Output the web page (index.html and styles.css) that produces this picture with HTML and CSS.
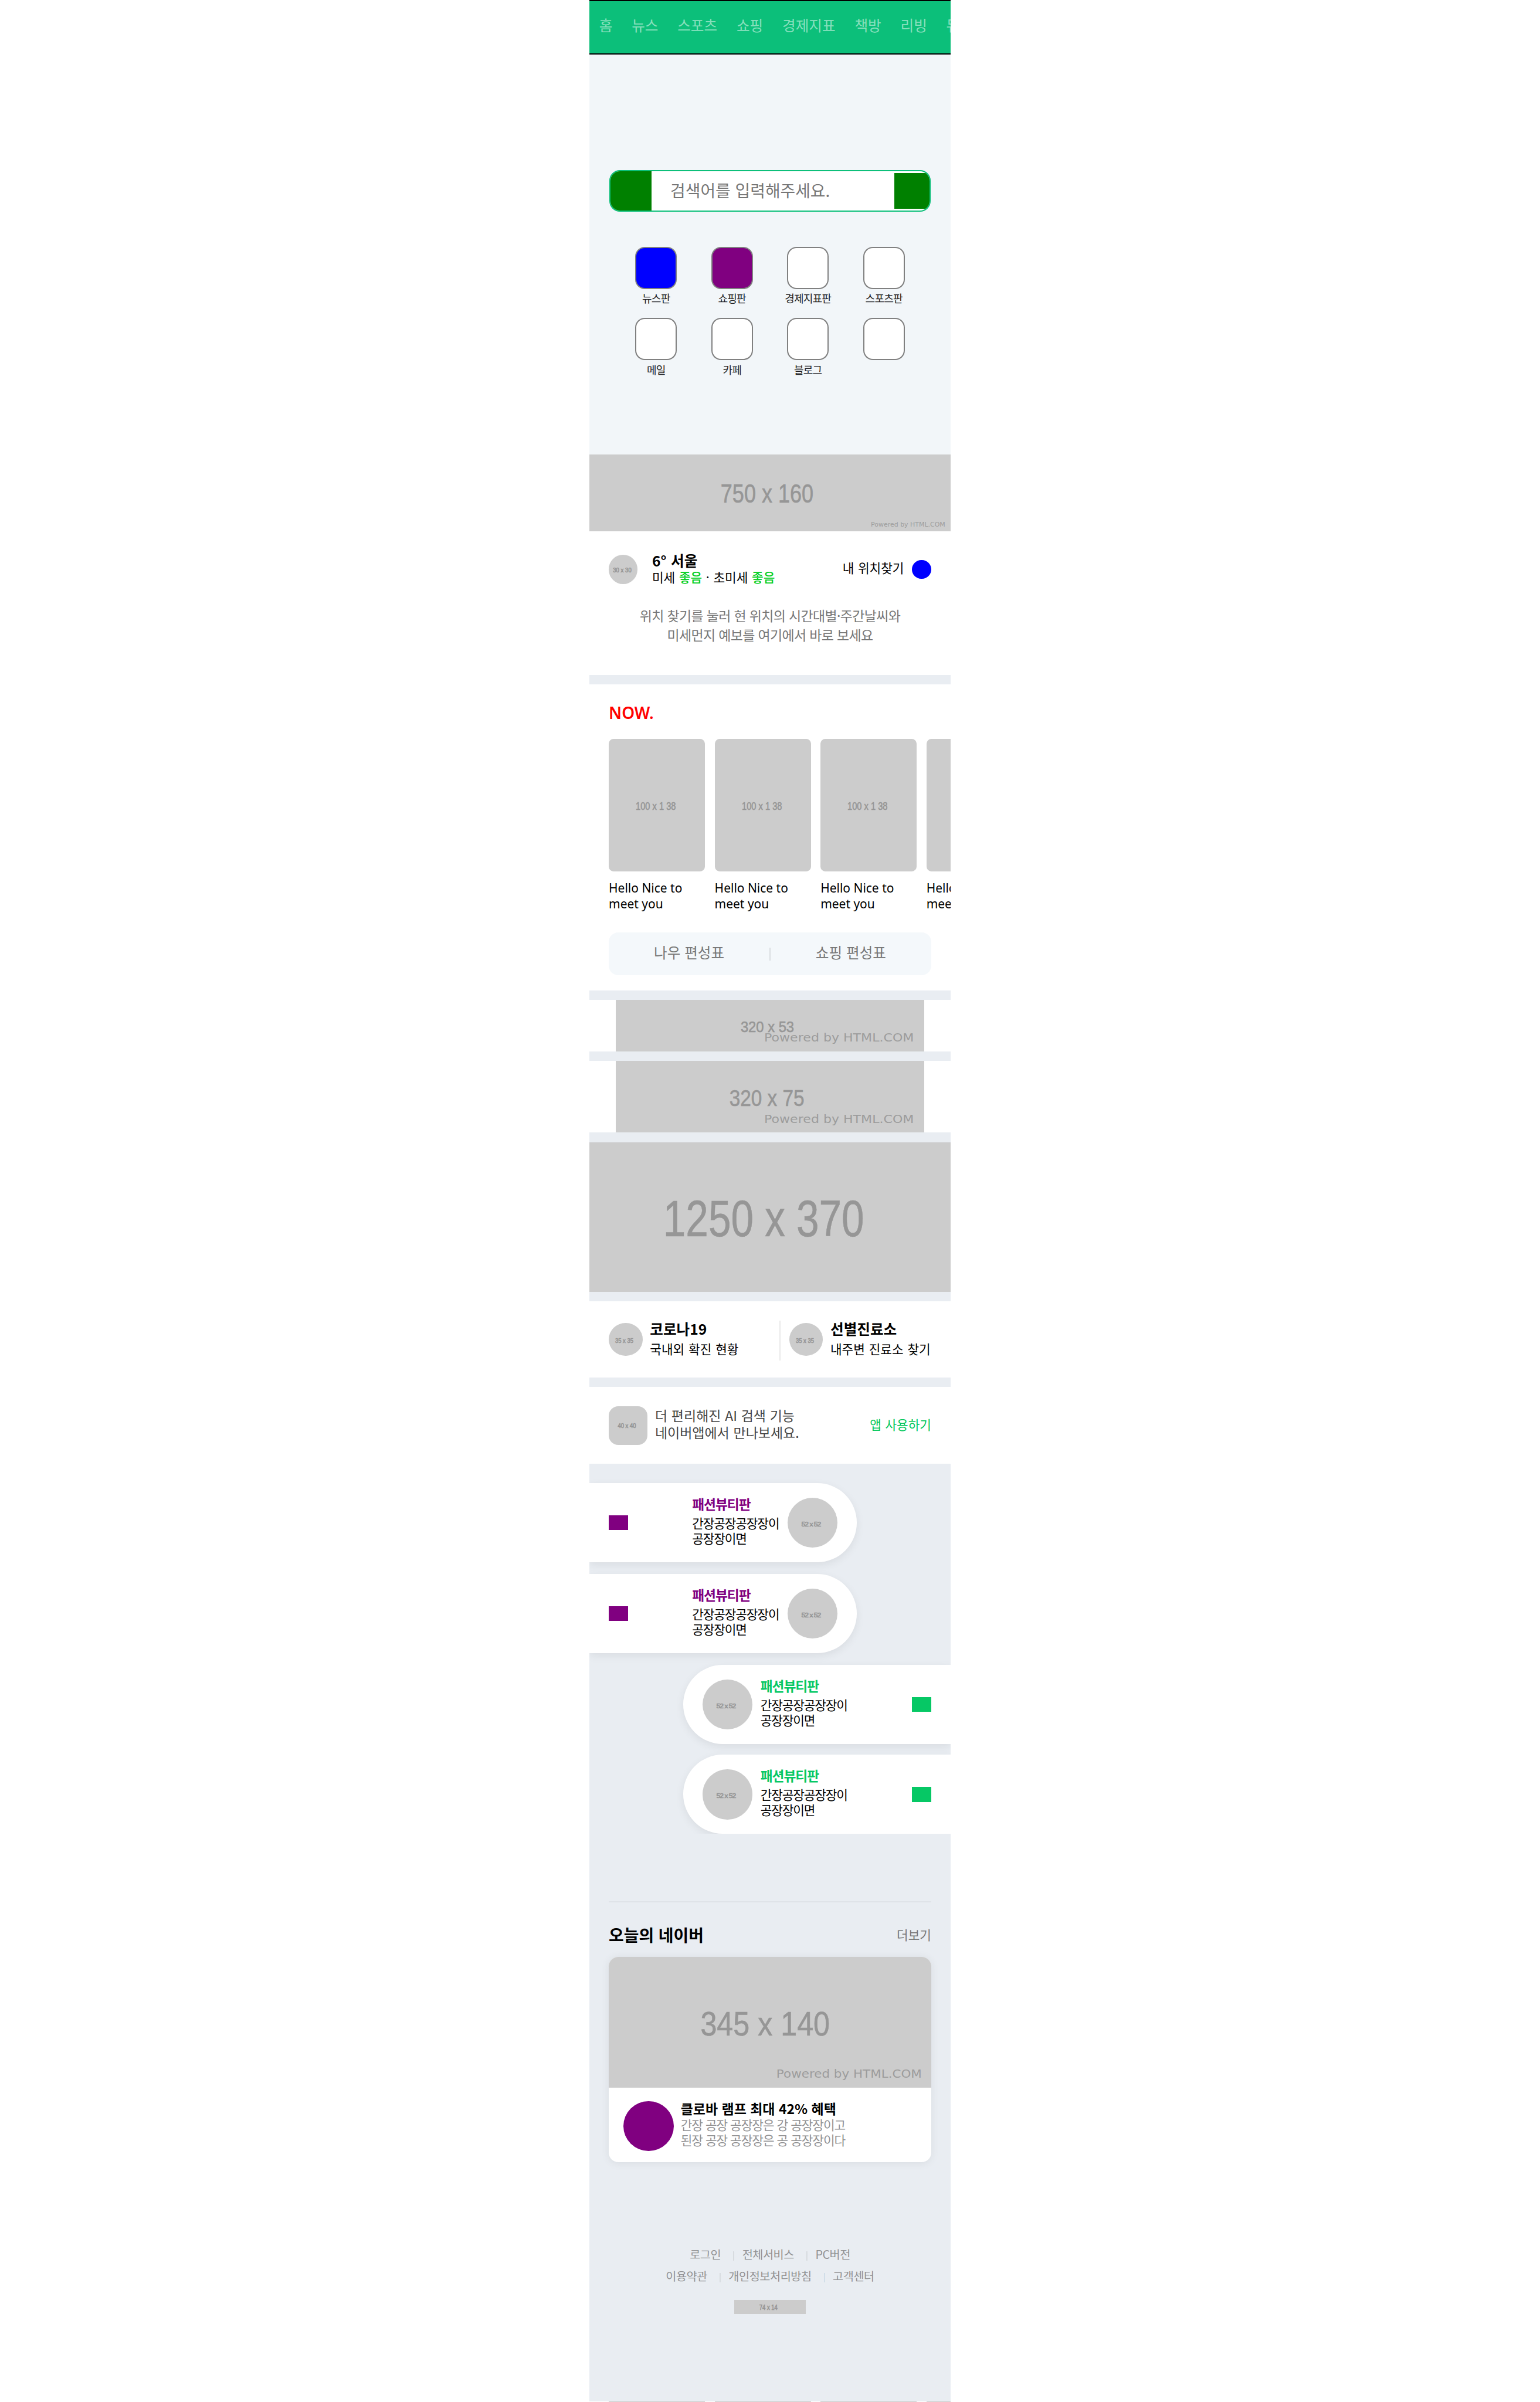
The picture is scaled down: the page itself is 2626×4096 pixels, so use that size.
FILE: index.html
```html
<!DOCTYPE html>
<html lang="ko">
<head>
<meta charset="utf-8">
<title>Mobile portal</title>
<link rel="stylesheet" href="styles.css">
</head>
<body>
<div class="page">
  <nav class="nav">
    <a>홈</a><a>뉴스</a><a>스포츠</a><a>쇼핑</a><a>경제지표</a><a>책방</a><a>리빙</a><a>뮤직</a>
  </nav>

  <section class="hero">
    <div class="search">
      <span class="search-logo"></span>
      <span class="search-text">검색어를 입력해주세요.</span>
      <span class="search-btn"></span>
    </div>
    <div class="shortcuts">
      <div class="shortcut"><i class="blue"></i><span>뉴스판</span></div>
      <div class="shortcut"><i class="purple"></i><span>쇼핑판</span></div>
      <div class="shortcut"><i></i><span>경제지표판</span></div>
      <div class="shortcut"><i></i><span>스포츠판</span></div>
      <div class="shortcut"><i></i><span>메일</span></div>
      <div class="shortcut"><i></i><span>카페</span></div>
      <div class="shortcut"><i></i><span>블로그</span></div>
      <div class="shortcut"><i></i><span></span></div>
    </div>
  </section>

  <svg class="ph" viewBox="0 0 675 144"><text class="dim" x="245.5" y="90" font-size="48" textLength="173.5" lengthAdjust="spacingAndGlyphs">750 x 160</text><text class="pow" x="526.5" y="135" font-size="11.5" textLength="139" lengthAdjust="spacingAndGlyphs">Powered by HTML.COM</text></svg>

  <section class="weather">
    <div class="weather-top">
      <svg class="ph avatar54" viewBox="0 0 54 54"><text class="dim" x="8" y="32.5" font-size="12.5" textLength="34.5" lengthAdjust="spacingAndGlyphs">30 x 30</text></svg>
      <div class="weather-info">
        <strong>6° 서울</strong>
        <p>미세 <b>좋음</b> · 초미세 <b>좋음</b></p>
      </div>
      <span class="locate">내 위치찾기</span>
      <span class="locate-dot"></span>
    </div>
    <p class="weather-msg">위치 찾기를 눌러 현 위치의 시간대별·주간날씨와<br>미세먼지 예보를 여기에서 바로 보세요</p>
  </section>

  <section class="now">
    <h2>NOW.</h2>
    <div class="cards">
      <div class="card"><svg class="ph" viewBox="0 0 180 248"><text class="dim" x="50.5" y="133" font-size="20.5" textLength="75" lengthAdjust="spacingAndGlyphs">100 x 1 38</text></svg><p>Hello Nice to<br>meet you</p></div>
      <div class="card"><svg class="ph" viewBox="0 0 180 248"><text class="dim" x="50.5" y="133" font-size="20.5" textLength="75" lengthAdjust="spacingAndGlyphs">100 x 1 38</text></svg><p>Hello Nice to<br>meet you</p></div>
      <div class="card"><svg class="ph" viewBox="0 0 180 248"><text class="dim" x="50.5" y="133" font-size="20.5" textLength="75" lengthAdjust="spacingAndGlyphs">100 x 1 38</text></svg><p>Hello Nice to<br>meet you</p></div>
      <div class="card"><svg class="ph" viewBox="0 0 180 248"></svg><p>Hello Nice to<br>meet you</p></div>
    </div>
    <div class="schedule"><span>나우 편성표</span><i></i><span>쇼핑 편성표</span></div>
  </section>

  <div class="banner"><svg class="ph" viewBox="0 0 576 96"><text class="dim" x="233.5" y="60.5" font-size="29" textLength="100" lengthAdjust="spacingAndGlyphs">320 x 53</text><text class="pow" x="277.5" y="78" font-size="22" textLength="280" lengthAdjust="spacingAndGlyphs">Powered by HTML.COM</text></svg></div>
  <div class="banner"><svg class="ph" viewBox="0 0 576 134"><text class="dim" x="212.5" y="85" font-size="42" textLength="140" lengthAdjust="spacingAndGlyphs">320 x 75</text><text class="pow" x="277.5" y="116" font-size="22" textLength="280" lengthAdjust="spacingAndGlyphs">Powered by HTML.COM</text></svg></div>
  <div class="banner wide"><svg class="ph" viewBox="0 0 675 280"><text class="dim" x="138" y="176" font-size="96" textLength="376" lengthAdjust="spacingAndGlyphs">1250 x 370</text></svg></div>

  <section class="covid">
    <div class="covid-item">
      <svg class="ph avatar63" viewBox="0 0 63 62"><text class="dim" x="12" y="37" font-size="12" textLength="34" lengthAdjust="spacingAndGlyphs">35 x 35</text></svg>
      <div><strong>코로나19</strong><p>국내외 확진 현황</p></div>
    </div>
    <div class="covid-item">
      <svg class="ph avatar63" viewBox="0 0 63 62"><text class="dim" x="12" y="37" font-size="12" textLength="34" lengthAdjust="spacingAndGlyphs">35 x 35</text></svg>
      <div><strong>선별진료소</strong><p>내주변 진료소 찾기</p></div>
    </div>
  </section>

  <section class="app">
    <svg class="ph app-icon" viewBox="0 0 72 72"><text class="dim" x="17" y="41" font-size="12" textLength="34" lengthAdjust="spacingAndGlyphs">40 x 40</text></svg>
    <p>더 편리해진 AI 검색 기능<br>네이버앱에서 만나보세요.</p>
    <a>앱 사용하기</a>
  </section>

  <section class="boards">
    <div class="board left">
      <i></i><div><strong>패션뷰티판</strong><p>간장공장공장장이<br>공장장이면</p></div>
      <svg class="ph avatar94" viewBox="0 0 94 94"><text class="dim" x="26" y="54" font-size="13" textLength="36" lengthAdjust="spacingAndGlyphs">52 x 52</text></svg>
    </div>
    <div class="board left">
      <i></i><div><strong>패션뷰티판</strong><p>간장공장공장장이<br>공장장이면</p></div>
      <svg class="ph avatar94" viewBox="0 0 94 94"><text class="dim" x="26" y="54" font-size="13" textLength="36" lengthAdjust="spacingAndGlyphs">52 x 52</text></svg>
    </div>
    <div class="board right">
      <svg class="ph avatar94" viewBox="0 0 94 94"><text class="dim" x="26" y="54" font-size="13" textLength="36" lengthAdjust="spacingAndGlyphs">52 x 52</text></svg>
      <div><strong>패션뷰티판</strong><p>간장공장공장장이<br>공장장이면</p></div><i></i>
    </div>
    <div class="board right">
      <svg class="ph avatar94" viewBox="0 0 94 94"><text class="dim" x="26" y="54" font-size="13" textLength="36" lengthAdjust="spacingAndGlyphs">52 x 52</text></svg>
      <div><strong>패션뷰티판</strong><p>간장공장공장장이<br>공장장이면</p></div><i></i>
    </div>
  </section>

  <section class="today">
    <header><h2>오늘의 네이버</h2><a>더보기</a></header>
    <article class="story">
      <svg class="ph" viewBox="0 0 603 244"><text class="dim" x="171.5" y="147.5" font-size="63" textLength="242" lengthAdjust="spacingAndGlyphs">345 x 140</text><text class="pow" x="313.5" y="226" font-size="21" textLength="272" lengthAdjust="spacingAndGlyphs">Powered by HTML.COM</text></svg>
      <div class="story-body">
        <i></i>
        <div><strong>클로바 램프 최대 42% 혜택</strong><p>간장 공장 공장장은 강 공장장이고<br>된장 공장 공장장은 공 공장장이다</p></div>
      </div>
    </article>
  </section>

  <footer class="footer">
    <div class="links"><a>로그인</a><a>전체서비스</a><a>PC버전</a></div>
    <div class="links"><a>이용약관</a><a>개인정보처리방침</a><a class="accent">고객센터</a></div>
    <svg class="ph mark" viewBox="0 0 133 26"><text class="dim" x="47" y="19" font-size="13" textLength="34" lengthAdjust="spacingAndGlyphs">74 x 14</text></svg>
  </footer>
  <div class="next-row"><i></i><i></i><i></i><i></i></div>
</div>
</body>
</html>
```
FILE: styles.css
```css
html { font-size: 9.118056px; background: #fff; }
* { box-sizing: border-box; }
body, p, h2 { margin: 0; }
body {
  font-family: "Noto Sans CJK KR", "Noto Sans", sans-serif;
  height: 4096px;
  overflow: hidden;
}
i { display: block; flex: none; }
svg { display: block; flex: none; }
.page { width: 67.5rem; margin: 0 auto; height: 449.2rem; overflow: hidden; background: #e9edf2; }

/* grey placeholder pictures */
.ph { width: 100%; background: #ccc; }
.dim { font-family: "Liberation Sans", Arial, sans-serif; fill: #969696; stroke: #969696; stroke-width: .7px; }
.pow { font-family: "DejaVu Sans", Verdana, sans-serif; fill: #9c9c9c; }

.nav {
  height: 10.2rem; border: solid #000; border-width: 2px 0; background: #0cbf7a;
  display: flex; overflow: hidden; white-space: nowrap;
  color: rgba(255,255,255,.52); font-size: 2.7rem; line-height: 8.8rem;
}
.nav a { padding: 0 1.8rem; flex: none; }

.hero { height: 74.8rem; background: #f2f6f9; padding: 21.6rem 3.7rem 0; }
.search {
  height: 7.8rem; border: 2px solid #0cbf7a; border-radius: 2rem; background: #fff;
  display: flex; align-items: center; overflow: hidden;
}
.search-logo { width: 7.65rem; height: 100%; background: green; }
.search-text { flex: 1; padding: 0 0 .3rem 3.55rem; font-size: 3.06rem; color: #757575; }
.search-btn { width: 6.6rem; height: 6.6rem; background: green; }

.shortcuts {
  display: grid; grid-template-columns: repeat(4, 14.2rem);
  grid-auto-rows: 13.3rem; margin: 6.6rem 0 0 1.65rem;
}
.shortcut { display: flex; flex-direction: column; align-items: center; }
.shortcut i { width: 7.8rem; height: 7.85rem; border: 2px solid gray; border-radius: 1.8rem; background: #fff; }
.shortcut .blue { background: #00f; }
.shortcut .purple { background: purple; }
.shortcut span { margin-top: .5rem; font-size: 1.98rem; letter-spacing: -.09rem; line-height: 2.6rem; color: #1e1e23; }

.weather { height: 26.8rem; margin-bottom: 1.8rem; padding: 3.8rem 3.6rem 0; background: #fff; }
.weather-top { display: flex; height: 6.4rem; align-items: center; }
.avatar54 { width: 5.4rem; height: 5.4rem; border-radius: 50%; margin-top: .2rem; }
.weather-info { margin-left: 2.7rem; flex: 1; word-spacing: .08rem; }
.weather-info strong { display: block; font-size: 2.7rem; line-height: 3.2rem; }
.weather-info p { font-size: 2.34rem; line-height: 3.12rem; }
.weather-info b { color: #03cf1f; font-weight: 500; }
.locate { font-size: 2.34rem; line-height: 3rem; padding-bottom: .5rem; word-spacing: .06rem; }
.locate-dot { width: 3.6rem; height: 3.6rem; border-radius: 50%; background: #00f; margin: .2rem 0 0 1.5rem; }
.weather-msg { margin-top: 3.7rem; text-align: center; font-size: 2.52rem; letter-spacing: -.07rem; line-height: 3.6rem; color: #777; }

.now { height: 57.2rem; margin-bottom: 1.8rem; padding: 3.25rem 3.6rem 0; background: #fff; }
.now h2 { font: 600 3.06rem/4rem "Noto Sans", sans-serif; color: red; }
.cards { display: flex; gap: 1.8rem; margin: 2.95rem -3.6rem 0 0; overflow: hidden; }
.card { width: 18rem; flex: none; }
.card svg { border-radius: .9rem; height: 24.8rem; }
.card p { margin-top: 1.6rem; font: 2.3rem/3rem "Noto Sans", sans-serif; }
.schedule {
  margin-top: 3.8rem; height: 8rem; border-radius: 1.8rem; background: #f4f8fb;
  display: flex; align-items: center; padding-bottom: .8rem; font-size: 2.7rem; color: #777;
}
.schedule span { flex: 1; text-align: center; }
.schedule i { width: .2rem; height: 2.4rem; background: #d9dde1; margin-top: .8rem; }

.banner { padding: 0 4.95rem; margin-bottom: 1.8rem; background: #fff; }
.banner.wide { padding: 0; }

.covid { height: 14.2rem; margin-bottom: 1.8rem; padding-top: 3.6rem; display: flex; background: #fff; }
.covid-item { flex: 0 0 33.75rem; height: 7.4rem; padding: 0 0 .4rem 3.6rem; display: flex; align-items: center; white-space: nowrap; }
.covid-item + .covid-item { background: linear-gradient(#eaeaea, #eaeaea) no-repeat 1.7rem 0 / 2px 100%; }
.avatar63 { width: 6.3rem; height: 6.2rem; border-radius: 50%; }
.covid-item div { margin: -.3rem 0 0 1.4rem; }
.covid-item strong { display: block; font-size: 2.7rem; line-height: 3.8rem; }
.covid-item p { font-size: 2.34rem; line-height: 3.8rem; word-spacing: .1rem; }

.app { height: 14.4rem; padding: 3.6rem; display: flex; background: #fff; color: #444; font-size: 2.52rem; line-height: 3.2rem; }
.app-icon { width: 7.2rem; height: 7.2rem; border-radius: 1.8rem; }
.app p { margin: .1rem 0 0 1.45rem; flex: 1; word-spacing: .04rem; }
.app a { color: #03c75a; font-size: 2.34rem; line-height: 6.8rem; word-spacing: .06rem; }

.boards { padding-top: 3.6rem; height: 69.2rem; overflow: hidden; display: flex; flex-direction: column; gap: 2.2rem; }
.board {
  height: 14.8rem; flex: none; background: #fff; display: flex; align-items: center;
  box-shadow: 0 .5rem 1.6rem rgba(0,0,0,.07); font-size: 2.34rem; letter-spacing: -.12rem; line-height: 2.8rem;
}
.board:last-child { margin-top: -.2rem; }
.board.left { width: 50rem; border-radius: 0 7.4rem 7.4rem 0; padding: 0 3.6rem; }
.board.right { width: 50rem; border-radius: 7.4rem 0 0 7.4rem; padding: 0 3.6rem; align-self: flex-end; }
.board i { width: 3.6rem; height: 2.8rem; background: #06c865; }
.board.left i { background: purple; }
.board div { padding-bottom: 1.35rem; }
.board strong { display: block; font-size: 2.5rem; line-height: 4.2rem; color: #06c865; }
.board.left strong { color: purple; }
.board.left div { margin-left: auto; }
.board.left svg { margin-left: 1.6rem; }
.board.right div { margin: 0 auto 0 1.5rem; }
.avatar94 { width: 9.36rem; height: 9.36rem; border-radius: 50%; }

.today { height: 64.1rem; padding: 12.6rem 3.6rem 0; }
.today header { border-top: 2px solid #dfe3e8; padding-top: 3.05rem; height: 10.4rem; display: flex; justify-content: space-between; line-height: 6rem; }
.today h2 { font-size: 3.06rem; line-height: 6rem; }
.today header a { font-size: 2.34rem; color: #777; }
.story { height: 38.4rem; background: #fff; border-radius: 1.8rem; box-shadow: 0 .2rem 1.6rem rgba(0,0,0,.07); }
.story svg { border-radius: 1.8rem 1.8rem 0 0; }
.story-body { display: flex; padding: 2.4rem 2.75rem; }
.story-body i { width: 9.4rem; height: 9.3rem; border-radius: 50%; background: purple; margin-top: .2rem; }
.story-body div { margin-left: 1.3rem; }
.story-body strong { display: block; font-size: 2.52rem; line-height: 3.16rem; }
.story-body p { font-size: 2.34rem; line-height: 2.8rem; letter-spacing: -.11rem; color: #929294; }

.footer { height: 42rem; padding-top: 12.5rem; }
.links { display: flex; justify-content: center; height: 4.05rem; line-height: 4rem; font-size: 2.16rem; letter-spacing: -.05rem; color: #929294; }
.links a + a { margin-left: 2.3rem; padding-left: 1.7rem; background: linear-gradient(#d6dade, #d6dade) no-repeat 0 1.5rem / .2rem 1.8rem; }
.links a.accent { background-image: linear-gradient(#cfdde8, #cfdde8); }
.mark { width: 13.3rem; height: 2.6rem; margin: 2.5rem auto 0; }

.next-row { display: flex; gap: 1.8rem; padding-left: 3.6rem; height: .2rem; background: #fff; overflow: hidden; }
.next-row i { width: 18rem; background: #ccc; }
```
